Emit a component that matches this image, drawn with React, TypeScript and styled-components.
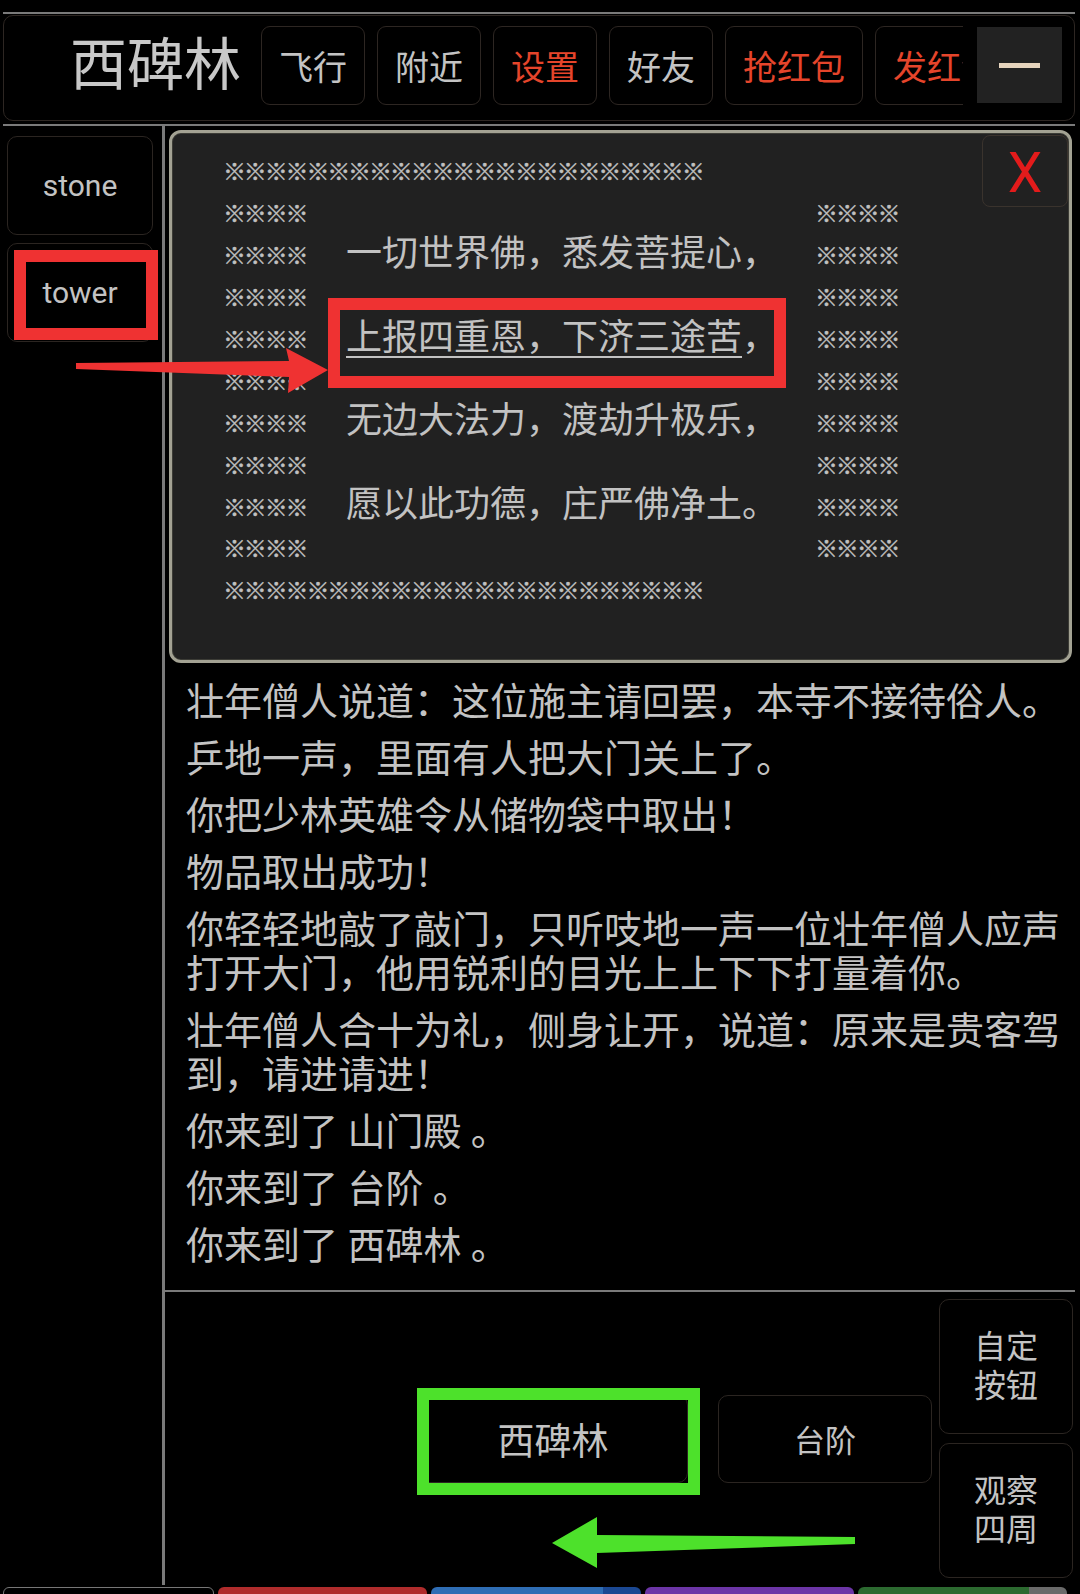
import React from "react";
import styled, { createGlobalStyle } from "styled-components";

const Global = createGlobalStyle`
  html, body { margin: 0; padding: 0; background: #000; }
  body { font-family: Roboto, "Noto Sans CJK SC", sans-serif; color: #c3c3c3; }
  * { box-sizing: border-box; }
`;

const CJK = `Roboto, "Noto Sans CJK SC", sans-serif`;

const Page = styled.div`
  position: relative;
  width: 1080px;
  height: 1594px;
  overflow: hidden;
  background: #000;
  display: flex;
  flex-direction: column;
  padding-top: 12px;
`;

const Header = styled.header`
  flex: none;
  margin: 0 5px 0 3px;
  border-top: 2px solid #7a7a7a;
  border-bottom: 2px solid #7a7a7a;
  padding: 1px 0 3px;
`;

const HeaderBar = styled.div`
  height: 106px;
  border: 1.5px solid #2d2622;
  border-radius: 10px;
  display: flex;
  align-items: flex-start;
  padding: 10px 12px 0 66px;
`;

const Title = styled.h1`
  flex: none;
  margin: 0 20px 0 0;
  height: 79px;
  font-family: ${CJK};
  font-weight: 400;
  font-size: 57px;
  line-height: 79px;
  color: #c8c8c8;
`;

const TopButtons = styled.nav`
  flex: 1;
  display: flex;
  gap: 12px;
  overflow: hidden;
  margin-right: 14px;
`;

const TopButton = styled.div<{ $red?: boolean }>`
  flex: none;
  height: 79px;
  padding: 0 17px;
  border: 1.5px solid #2d2622;
  border-radius: 9px;
  display: flex;
  align-items: center;
  justify-content: center;
  font-family: ${CJK};
  font-size: 34px;
  color: ${(p) => (p.$red ? "#e5452b" : "#c3c3c3")};
  white-space: nowrap;
`;

const MenuButton = styled.div`
  flex: none;
  width: 85px;
  height: 76px;
  margin-top: 1px;
  background: #222;
  display: flex;
  align-items: center;
  justify-content: center;
`;

const MenuBar = styled.span`
  width: 41px;
  height: 5px;
  background: #e6d4bd;
`;

const Body = styled.div`
  flex: none;
  height: 1459px;
  display: flex;
`;

const Sidebar = styled.aside`
  flex: none;
  width: 165px;
  border-right: 3px solid #7a7a7a;
  padding: 10px 0 0 7px;
  display: flex;
  flex-direction: column;
  gap: 8px;
`;

const SideButton = styled.div`
  width: 146px;
  height: 99px;
  border: 1.5px solid #2b2521;
  border-radius: 10px;
  display: flex;
  align-items: center;
  justify-content: center;
  font-family: Roboto, sans-serif;
  font-size: 30px;
  color: #c3c3c3;
`;

const Main = styled.main`
  flex: 1;
  margin-right: 5px;
  display: flex;
  flex-direction: column;
  min-width: 0;
`;

const Dialog = styled.section`
  position: relative;
  flex: none;
  height: 533px;
  margin: 4px 3px 0 4px;
  border: 3px solid #a3a293;
  border-radius: 12px;
  background: #212121;
  box-shadow: inset 0 0 0 1px #3c3c36;
  padding: 17px 0 0 51px;
`;

const PoemRow = styled.div`
  display: grid;
  grid-template-columns: 123px 469px auto;
  align-items: center;
  height: 41.9px;
`;

const Stars = styled.span`
  font-family: "Noto Sans CJK SC", sans-serif;
  font-size: 23px;
  letter-spacing: -2.15px;
  line-height: 1;
  color: #c0c0c0;
  -webkit-text-stroke: 0.35px #c0c0c0;
  white-space: nowrap;
`;

const PoemText = styled.span`
  font-family: ${CJK};
  font-size: 36px;
  line-height: 41.9px;
  color: #c2c2c2;
  white-space: nowrap;
`;

const PoemLink = styled.span`
  text-decoration: underline;
  text-decoration-thickness: 2px;
  text-underline-offset: 6px;
`;

const CloseButton = styled.div`
  position: absolute;
  top: 2px;
  right: 1px;
  width: 86px;
  height: 72px;
  padding-top: 5px;
  border: 1.5px solid #3a332d;
  border-radius: 8px;
  display: flex;
  align-items: center;
  justify-content: center;
  font-family: Roboto, sans-serif;
  font-size: 55px;
  line-height: 1;
  color: #e31b1b;
`;

const Log = styled.div`
  flex: 1;
  overflow: hidden;
  padding: 17px 10px 0 21px;
  font-family: ${CJK};
  font-size: 38px;
  line-height: 44px;
  color: #c3c3c3;
`;

const LogLine = styled.p`
  margin: 0 0 13px;
`;

const BottomPanel = styled.div`
  flex: none;
  height: 295px;
  border-top: 2px solid #7a7a7a;
  margin-left: -2px;
  display: flex;
`;

const Exits = styled.div`
  flex: 1;
  display: grid;
  grid-template-columns: 225px 270px 214px;
  column-gap: 30px;
  align-items: center;
`;

const ExitButton = styled.div<{ $current?: boolean }>`
  height: 88px;
  border: 1.5px solid #2b2521;
  border-radius: 10px;
  display: flex;
  align-items: center;
  justify-content: center;
  font-family: ${CJK};
  font-size: ${(p) => (p.$current ? 37 : 31)}px;
  color: #c3c3c3;
`;

const SideActions = styled.div`
  flex: none;
  width: 134px;
  margin: 0 2px 0 7px;
  padding-top: 7px;
  display: flex;
  flex-direction: column;
  gap: 9px;
`;

const ActionButton = styled.div`
  height: 135px;
  border: 1.5px solid #2b2521;
  border-radius: 10px;
  display: flex;
  align-items: center;
  justify-content: center;
  text-align: center;
  font-family: ${CJK};
  font-size: 32px;
  line-height: 39px;
  color: #c3c3c3;
`;

const Tabs = styled.div`
  flex: none;
  margin-top: 2px;
  height: 40px;
  display: flex;
  gap: 4px;
  padding: 0 13px 0 3px;
`;

const Tab = styled.div<{ $bg: string; $edge?: string; $outline?: boolean }>`
  flex: 1;
  border-radius: 6px 6px 0 0;
  background: ${(p) =>
    p.$edge ? `linear-gradient(90deg, ${p.$bg} 82%, ${p.$edge} 82%)` : p.$bg};
  border: ${(p) => (p.$outline ? "1.5px solid #777" : "none")};
`;

const Frame = styled.div<{ $color: string }>`
  position: absolute;
  border: 12px solid ${(p) => p.$color};
  pointer-events: none;
`;

const Overlay = styled.svg`
  position: absolute;
  left: 0;
  top: 0;
  pointer-events: none;
`;

const STAR4 = "※※※※";
const STAR23 = "※".repeat(23);

const poem: (React.ReactNode | null)[] = [
  null,
  "一切世界佛，悉发菩提心，",
  null,
  <>
    <PoemLink>上报四重恩，下济三途苦</PoemLink>，
  </>,
  null,
  "无边大法力，渡劫升极乐，",
  null,
  "愿以此功德，庄严佛净土。",
  null,
];

const logLines = [
  "壮年僧人说道：这位施主请回罢，本寺不接待俗人。",
  "乒地一声，里面有人把大门关上了。",
  "你把少林英雄令从储物袋中取出！",
  "物品取出成功！",
  "你轻轻地敲了敲门，只听吱地一声一位壮年僧人应声打开大门，他用锐利的目光上上下下打量着你。",
  "壮年僧人合十为礼，侧身让开，说道：原来是贵客驾到，请进请进！",
  "你来到了 山门殿 。",
  "你来到了 台阶 。",
  "你来到了 西碑林 。",
];

export default function App() {
  return (
    <Page>
      <Global />
      <Header>
        <HeaderBar>
          <Title>西碑林</Title>
          <TopButtons>
            <TopButton>飞行</TopButton>
            <TopButton>附近</TopButton>
            <TopButton $red>设置</TopButton>
            <TopButton>好友</TopButton>
            <TopButton $red>抢红包</TopButton>
            <TopButton $red>发红包</TopButton>
          </TopButtons>
          <MenuButton>
            <MenuBar />
          </MenuButton>
        </HeaderBar>
      </Header>
      <Body>
        <Sidebar>
          <SideButton>stone</SideButton>
          <SideButton>tower</SideButton>
        </Sidebar>
        <Main>
          <Dialog>
            <PoemRow>
              <Stars>{STAR23}</Stars>
            </PoemRow>
            {poem.map((line, i) => (
              <PoemRow key={i}>
                <Stars>{STAR4}</Stars>
                <PoemText>{line}</PoemText>
                <Stars>{STAR4}</Stars>
              </PoemRow>
            ))}
            <PoemRow>
              <Stars>{STAR23}</Stars>
            </PoemRow>
            <CloseButton>X</CloseButton>
          </Dialog>
          <Log>
            {logLines.map((l, i) => (
              <LogLine key={i}>{l}</LogLine>
            ))}
          </Log>
          <BottomPanel>
            <Exits>
              <span />
              <ExitButton $current>西碑林</ExitButton>
              <ExitButton>台阶</ExitButton>
            </Exits>
            <SideActions>
              <ActionButton>
                自定
                <br />
                按钮
              </ActionButton>
              <ActionButton>
                观察
                <br />
                四周
              </ActionButton>
            </SideActions>
          </BottomPanel>
        </Main>
      </Body>
      <Tabs>
        <Tab $bg="#000" $outline />
        <Tab $bg="#b02c2c" />
        <Tab $bg="#2f6db4" $edge="#1b4892" />
        <Tab $bg="#6c35a6" />
        <Tab $bg="#2c6a30" $edge="#6a6a6a" />
      </Tabs>

      <Frame $color="#ef3232" style={{ left: 14, top: 250, width: 144, height: 90 }} />
      <Frame $color="#ef3232" style={{ left: 328, top: 298, width: 458, height: 90 }} />
      <Frame $color="#4de12b" style={{ left: 417, top: 1388, width: 283, height: 107 }} />
      <Overlay width={1080} height={1594} viewBox="0 0 1080 1594">
        <polygon
          fill="#ef3232"
          points="76,363 289,361 286,348 328,370 288,393 289,377 76,369"
        />
        <polygon
          fill="#4de12b"
          points="855,1537 597,1535 597,1517 552,1543 597,1568 597,1553 855,1544"
        />
      </Overlay>
    </Page>
  );
}
